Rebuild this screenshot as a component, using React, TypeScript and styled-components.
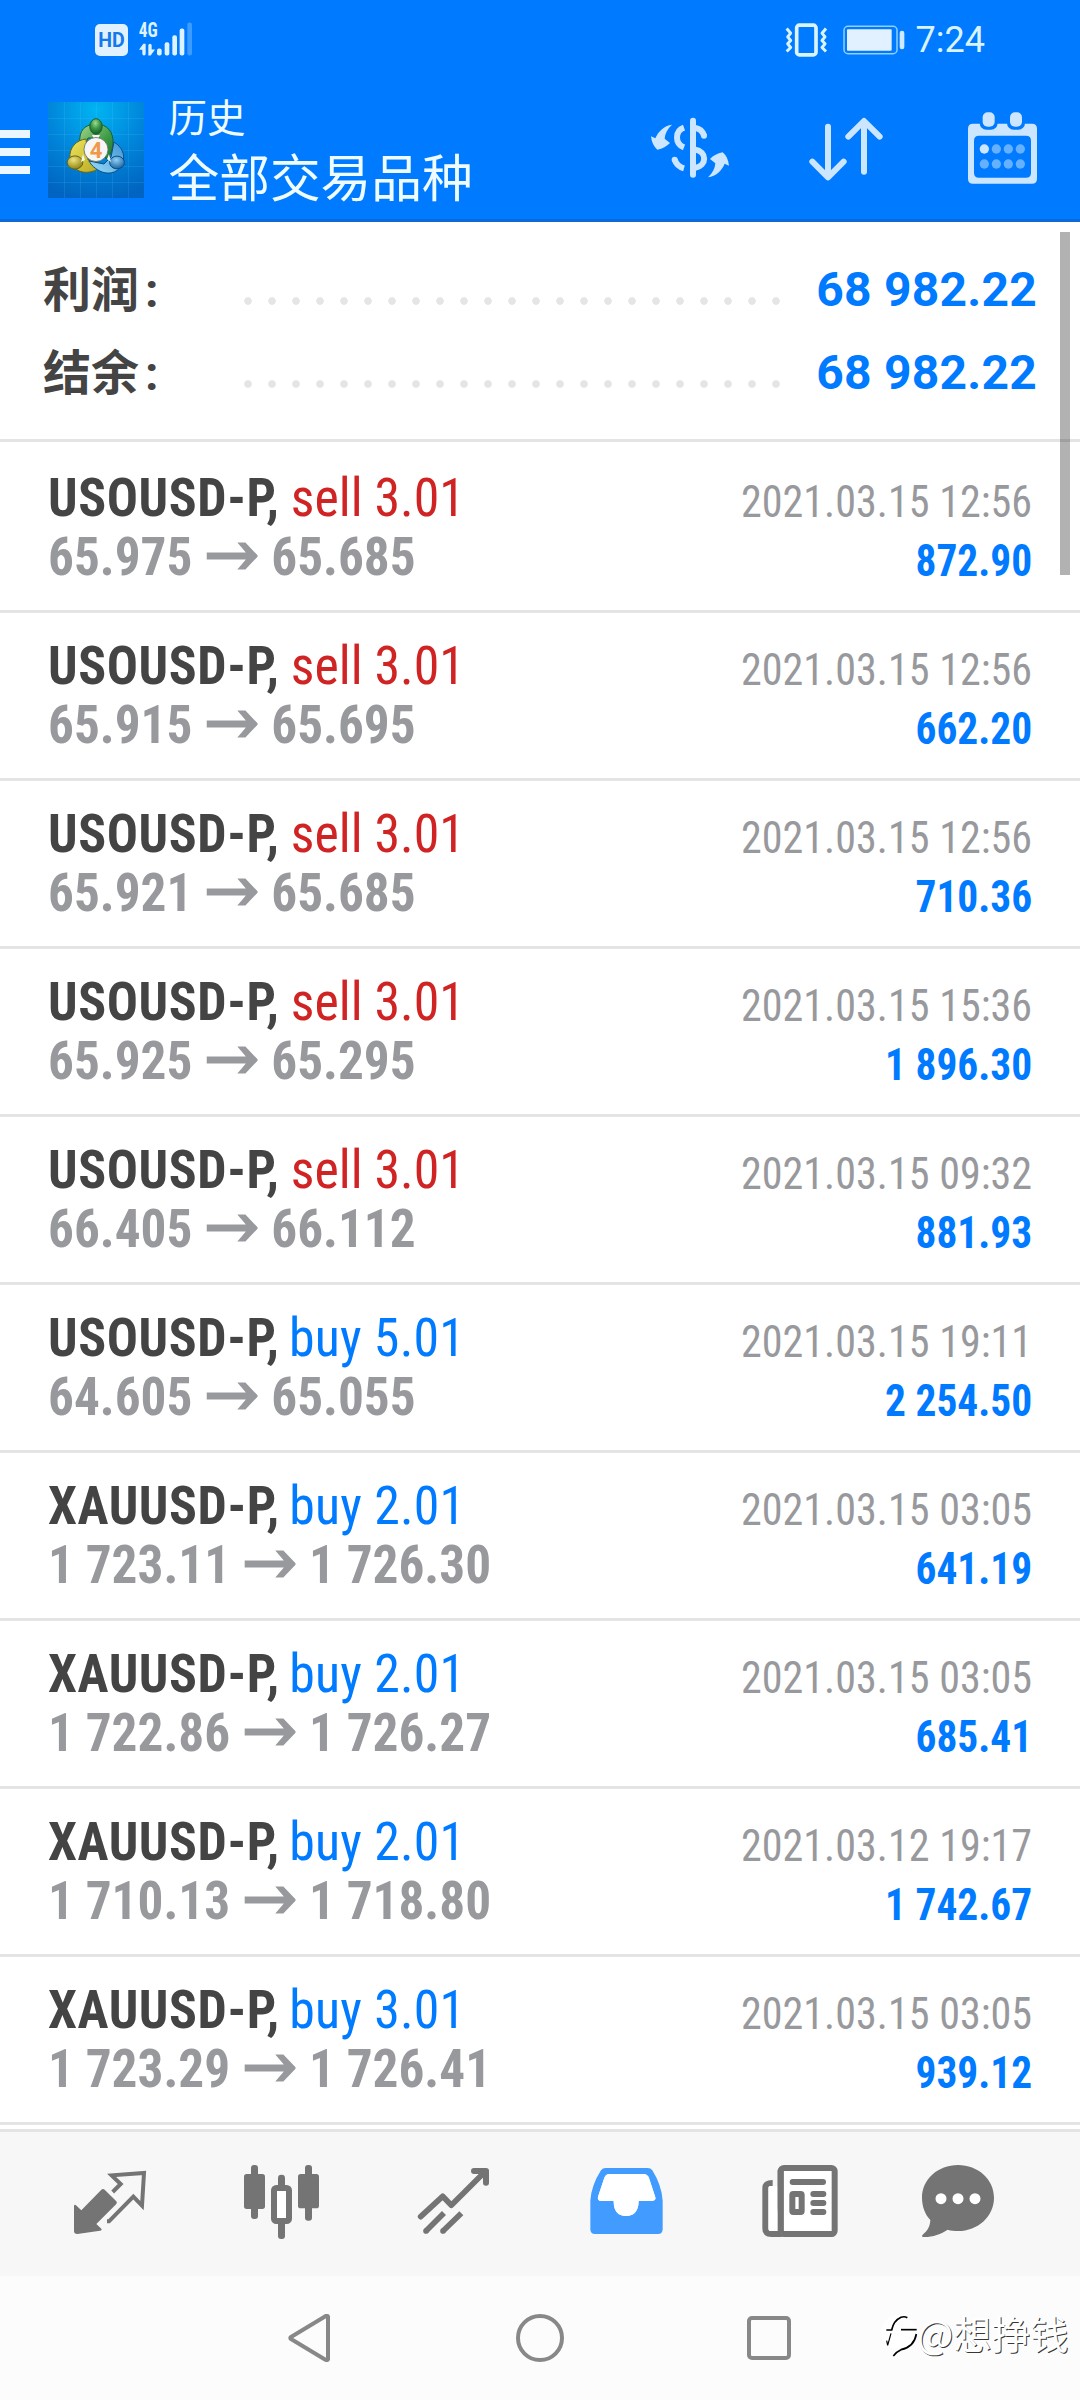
import React from "react";
import styled, { createGlobalStyle } from "styled-components";

const BLUE = "#007aff";
const ICE = "#cce6ff";
const GREY = "#747474";
const CONDENSED = '"Roboto Condensed", Roboto, "Liberation Sans", sans-serif';
const CJK = '"Noto Sans CJK SC", Roboto, sans-serif';

const GlobalStyle = createGlobalStyle`
  * { box-sizing: border-box; }
  body { margin: 0; background: #fff; font-family: Roboto, "Noto Sans CJK SC", sans-serif; }
  svg { display: block; flex: none; }
`;

const Screen = styled.div`
  position: relative;
  width: 1080px;
  height: 2400px;
  display: flex;
  flex-direction: column;
  background: #fff;
  overflow: hidden;
`;

const Header = styled.header`
  height: 222px;
  background: ${BLUE};
  border-bottom: 3px solid #0d69d5;
  display: flex;
  flex-direction: column;
`;

const StatusBar = styled.div`
  height: 79px;
  padding: 0 95px 0 95px;
  display: flex;
  align-items: center;
  justify-content: space-between;
`;

const StatusGroup = styled.div<{ $gap: number }>`
  display: flex;
  align-items: center;
  gap: ${(p) => p.$gap}px;
`;

const HdBadge = styled.div`
  width: 33px;
  height: 32px;
  border-radius: 5px;
  background: #e2f1ff;
`;

const Clock = styled.span`
  font: 400 36px/40px Roboto, sans-serif;
  color: #d9f4ff;
  margin-left: -5px;
`;

const Toolbar = styled.div`
  height: 140px;
  display: flex;
  align-items: flex-start;
`;

const MenuButton = styled.div`
  width: 30px;
  margin-top: 51px;
  display: flex;
  flex-direction: column;
  gap: 10px;
  span { height: 8px; background: #ebf7ff; }
`;

const AppIcon = styled.div`
  width: 96px;
  height: 96px;
  margin: 23px 0 0 18px;
`;

const Titles = styled.div`
  flex: 1;
  margin: 11px 0 0 24.5px;
  color: #effcff;
  font-family: ${CJK};
`;

const Caption = styled.div`
  font-size: 38.5px;
  line-height: 50px;
  height: 52px;
`;

const Heading = styled.div`
  font-size: 50.7px;
  line-height: 66px;
`;

const Actions = styled.div`
  display: flex;
  margin: 34px 42px 0 0;
`;

const ActionButton = styled.div<{ $before?: number }>`
  margin-left: ${(p) => p.$before ?? 0}px;
`;

const Summary = styled.section`
  height: 220px;
  padding: 26px 43px 0 43px;
  border-bottom: 3px solid #e4e4e4;
`;

const SummaryRow = styled.div`
  display: flex;
  height: 83px;
  line-height: 83px;
  font-size: 48px;
  font-weight: 700;
`;

const SummaryLabel = styled.div`
  width: 193px;
  padding-top: 1px;
  color: #444;
  i { font-style: normal; margin-left: 6px; }
`;

const Leader = styled.div`
  width: 552px;
  height: 24px;
  margin-top: 41px;
  background: radial-gradient(circle, #e5e5e5 3.4px, transparent 4.2px) 0 0 / 24px 24px;
`;

const SummaryValue = styled.div`
  flex: 1;
  text-align: right;
  letter-spacing: 0.25px;
  color: ${BLUE};
`;

const List = styled.main`
  flex: 1;
  padding-top: 3px;
`;

const DealRow = styled.article`
  height: 168px;
  padding: 23px 47.5px 0 48px;
  border-bottom: 3px solid #e4e4e4;
  display: flex;
  justify-content: space-between;
  font-family: ${CONDENSED};
  line-height: 59px;
  white-space: nowrap;
`;

const DealTitle = styled.div`
  height: 59px;
  display: flex;
  font-size: 54px;
  transform: scaleX(0.96);
  transform-origin: 0 0;
`;

const Symbol = styled.span`
  font-weight: 700;
  letter-spacing: 0.6px;
  color: #444;
`;

const Side = styled.span<{ $side: string }>`
  margin-left: ${(p) => (p.$side === "sell" ? 11.7 : 9.8)}px;
  letter-spacing: ${(p) => (p.$side === "sell" ? 0 : 0.2)}px;
  color: ${(p) => (p.$side === "sell" ? "#d02424" : BLUE)};
`;

const Prices = styled.div`
  height: 59px;
  display: flex;
  font-size: 54px;
  font-weight: 700;
  color: #98999d;
  transform: scaleX(0.949);
  transform-origin: 0 0;
  svg { margin: 15px 13.8px 0 14.8px; }
`;

const DealSide = styled.div`
  padding-top: 4px;
  text-align: right;
  font-size: 45px;
`;

const DealTime = styled.div`
  height: 59px;
  color: #98999d;
  transform: scaleX(0.936);
  transform-origin: 100% 0;
`;

const DealProfit = styled.div`
  height: 59px;
  font-weight: 700;
  color: ${BLUE};
  transform: scaleX(0.92);
  transform-origin: 100% 0;
`;

const ScrollThumb = styled.div`
  position: absolute;
  left: 1060px;
  top: 232px;
  width: 10px;
  height: 343px;
  background: rgba(0, 0, 0, 0.3);
`;

const TabBar = styled.nav`
  height: 147px;
  padding-left: 68px;
  border-top: 3px solid #e4e4e4;
  background: #f7f7f7;
  display: flex;
  align-items: center;
  gap: 88px;
`;

const Tab = styled.div<{ $shift?: number }>`
  width: 84px;
  margin-left: ${(p) => p.$shift ?? 0}px;
`;

const NavBar = styled.footer`
  height: 124px;
  background: #fcfcfc;
  display: flex;
  align-items: center;
  justify-content: center;
  gap: 181px;
`;

const Watermark = styled.div`
  position: absolute;
  left: 879px;
  top: 2307px;
  display: flex;
  align-items: center;
  font: 400 38.4px/56px ${CJK};
  color: #fff;
  text-shadow: 1px 1px 0.5px rgba(0, 0, 0, 0.8);
  span { margin: -3px 0 0 -2px; }
`;

const deals = [
  ["USOUSD-P", "sell", "3.01", "65.975", "65.685", "2021.03.15 12:56", "872.90"],
  ["USOUSD-P", "sell", "3.01", "65.915", "65.695", "2021.03.15 12:56", "662.20"],
  ["USOUSD-P", "sell", "3.01", "65.921", "65.685", "2021.03.15 12:56", "710.36"],
  ["USOUSD-P", "sell", "3.01", "65.925", "65.295", "2021.03.15 15:36", "1 896.30"],
  ["USOUSD-P", "sell", "3.01", "66.405", "66.112", "2021.03.15 09:32", "881.93"],
  ["USOUSD-P", "buy", "5.01", "64.605", "65.055", "2021.03.15 19:11", "2 254.50"],
  ["XAUUSD-P", "buy", "2.01", "1 723.11", "1 726.30", "2021.03.15 03:05", "641.19"],
  ["XAUUSD-P", "buy", "2.01", "1 722.86", "1 726.27", "2021.03.15 03:05", "685.41"],
  ["XAUUSD-P", "buy", "2.01", "1 710.13", "1 718.80", "2021.03.12 19:17", "1 742.67"],
  ["XAUUSD-P", "buy", "3.01", "1 723.29", "1 726.41", "2021.03.15 03:05", "939.12"],
];

const HdIcon = () => (
  <HdBadge>
    <svg width="33" height="32" viewBox="0 0 33 32">
      <text x="3.2" y="23.3" textLength="26.5" lengthAdjust="spacingAndGlyphs" fontFamily="Roboto" fontWeight="700" fontSize="20.5" fill="#1479ea">HD</text>
    </svg>
  </HdBadge>
);

const SignalIcon = () => (
  <svg width="56" height="48" viewBox="174 16.5 168 144" fill="#dff3ff">
    <text x="176" y="80" textLength="57" lengthAdjust="spacingAndGlyphs" fontFamily="Roboto Condensed" fontWeight="700" fontSize="61">4G</text>
    <path d="M177 118 L190 100 H197 V130 Q197 135 192 135 Q187 135 187 130 V118Z" />
    <path d="M225 117 L212 135 H205 V105 Q205 100 210 100 Q215 100 215 105 V117Z" />
    <rect x="231" y="114" width="14" height="21" rx="6" />
    <rect x="254" y="95" width="14" height="40" rx="6" />
    <rect x="277" y="74" width="14" height="61" rx="6" />
    <rect x="299" y="54" width="14" height="81" rx="6" />
    <rect x="322" y="36" width="14" height="99" rx="6" opacity="0.28" />
  </svg>
);

const zigzag = "M562 84 L574 98 L565 109 L574 120 L565 130 L574 141 L562 153";

const VibrateIcon = () => (
  <svg width="42.7" height="34" viewBox="557 67.5 128 102" fill="none" stroke="#d9f4ff">
    <rect x="592" y="74" width="58" height="89" rx="8" strokeWidth="11" />
    <path d={zigzag} strokeWidth="9" strokeLinejoin="round" />
    <path d={zigzag} strokeWidth="9" strokeLinejoin="round" transform="translate(1242 0) scale(-1 1)" />
  </svg>
);

const BatteryIcon = () => (
  <svg width="61.7" height="30" viewBox="730 73 185 90">
    <rect x="733" y="77" width="159" height="82" rx="12" fill="none" stroke="#8fd0ff" strokeWidth="4.5" />
    <rect x="742" y="86" width="134" height="64" rx="3" fill="#e2f1ff" />
    <rect x="900" y="90" width="14" height="56" rx="7" fill="#cfeaff" />
  </svg>
);

const MetaTraderLogo = () => (
  <svg width="96" height="96" viewBox="0 0 96 96">
    <defs>
      <radialGradient id="sky" cx="50%" cy="8%" r="95%">
        <stop offset="0" stopColor="#00b4f2" />
        <stop offset="0.5" stopColor="#0087dc" />
        <stop offset="1" stopColor="#0064c0" />
      </radialGradient>
      <linearGradient id="green" x1="0" y1="0" x2="1" y2="1">
        <stop offset="0" stopColor="#a5d890" />
        <stop offset="0.6" stopColor="#3f9a45" />
        <stop offset="1" stopColor="#1d7433" />
      </linearGradient>
      <linearGradient id="yellow" x1="0" y1="0" x2="1" y2="1">
        <stop offset="0" stopColor="#eee65e" />
        <stop offset="1" stopColor="#b5a51c" />
      </linearGradient>
      <linearGradient id="blue" x1="1" y1="0" x2="0" y2="1">
        <stop offset="0" stopColor="#3f95d5" />
        <stop offset="1" stopColor="#9bdcf8" />
      </linearGradient>
      <radialGradient id="greenHead" cx="45%" cy="28%" r="70%">
        <stop offset="0" stopColor="#9ddb95" />
        <stop offset="0.5" stopColor="#3f9a45" />
        <stop offset="1" stopColor="#15602a" />
      </radialGradient>
      <radialGradient id="yellowHead" cx="40%" cy="30%" r="75%">
        <stop offset="0" stopColor="#eee67c" />
        <stop offset="1" stopColor="#8a7c10" />
      </radialGradient>
      <radialGradient id="blueHead" cx="45%" cy="30%" r="75%">
        <stop offset="0" stopColor="#8ed2f5" />
        <stop offset="1" stopColor="#125a9c" />
      </radialGradient>
    </defs>
    <rect width="96" height="96" fill="url(#sky)" />
    <path d="M16.5 0V96M32.5 0V96M48.5 0V96M64.5 0V96M80.5 0V96M0 16.5H96M0 32.5H96M0 48.5H96M0 64.5H96M0 80.5H96" stroke="#6fd0ff" strokeOpacity="0.14" />
    <g stroke="#0b4f86" strokeWidth="1">
      <path d="M32 42 C30 28 38 22 48 22 C59 22 66 30 65 42 C64 50 62 54 58 57 L52 36 L40 36 L36 46Z" fill="url(#green)" stroke="#176030" />
      <path d="M38 37 C28 38 21 46 22 56 C23 66 32 72 42 70 C48 69 52 66 54 62 L40 58Z" fill="url(#yellow)" stroke="#6b6412" />
      <path d="M66 40 C74 45 77 52 75 60 C72 70 62 73 54 70 C47 67 43 63 41 59 L56 62 L63 55Z" fill="url(#blue)" />
      <ellipse cx="48" cy="24.5" rx="6.2" ry="7.8" fill="url(#greenHead)" stroke="#176030" />
      <ellipse cx="27" cy="60.5" rx="7.8" ry="6.6" fill="url(#yellowHead)" stroke="#6b6412" />
      <ellipse cx="69" cy="60.5" rx="7.4" ry="6.4" fill="url(#blueHead)" />
    </g>
    <path d="M44 33 H52 L50 37 H46Z M35 52 L37 58 L33 60Z M61 52 L63 60 L59 57Z" fill="#f2f7ee" />
    <circle cx="48" cy="47.5" r="12" fill="#f6f6f4" stroke="#5d6b62" strokeWidth="0.8" />
    <text x="48" y="55.5" textAnchor="middle" fontFamily="Roboto" fontWeight="700" fontSize="22" fill="#f3984a">4</text>
  </svg>
);

const halfArrow =
  "M153 410 L166 416 C174 396 192 378 216 375 C202 388 195 402 194 417 L210 430 C200 440 188 447 172 450 C161 441 155 428 153 410Z";

const CurrencyIcon = () => (
  <svg width="80" height="72" viewBox="150 340 240 216" fill="none" stroke={ICE} strokeWidth="18">
    <path d="M279 363 V525" strokeLinecap="round" />
    <path d="M252 384 C224 394 224 432 252 443" />
    <path d="M224 480 C228 493 238 502 252 506" />
    <path d="M284 384 C298 386 308 394 312 408 M284 449 C322 456 322 498 284 505" />
    <g fill={ICE} stroke="none">
      <circle cx="224" cy="480" r="9" />
      <circle cx="312" cy="408" r="9" />
      <path d={halfArrow} />
      <path d={halfArrow} transform="rotate(180 270 454)" />
    </g>
  </svg>
);

const SortIcon = () => (
  <svg width="76" height="72" viewBox="624 340 228 216" fill="none" stroke={ICE} strokeWidth="18" strokeLinecap="round" strokeLinejoin="round">
    <path d="M684 381 V532 M637 486 L684 533 L731 486" />
    <path d="M792 516 V365 M745 411 L792 364 L839 411" />
  </svg>
);

const CalendarIcon = () => (
  <svg width="71" height="72" viewBox="1101 340 213 216" fill={ICE} overflow="visible">
    <path fillRule="evenodd" d="M1119 372 H1296 Q1311 372 1311 387 V537 Q1311 552 1296 552 H1119 Q1104 552 1104 537 V387 Q1104 372 1119 372Z M1137 408 Q1122 408 1122 423 V519 Q1122 534 1137 534 H1278 Q1293 534 1293 519 V423 Q1293 408 1278 408Z" />
    {[1148, 1230].map((x) => (
      <g key={x}>
        <rect x={x - 9} y="329" width="54" height="61" rx="20" fill={BLUE} />
        <rect x={x} y="338" width="36" height="43" rx="15" />
      </g>
    ))}
    {[448, 493].map((cy) =>
      [1153, 1189, 1225, 1261].map((cx) => (
        <circle key={`${cx}-${cy}`} cx={cx} cy={cy} r="14" fill={cx === 1153 && cy === 448 ? ICE : "#66b1ff"} />
      ))
    )}
  </svg>
);

const PriceArrow = () => (
  <svg width="54.5" height="28" viewBox="0 0 54.5 28" fill="#98999d">
    <path d="M0 10.6 H41.5 L32.5 0.6 H41 L54.5 14 L41 27.4 H32.5 L41.5 17.4 H0Z" />
  </svg>
);

const TabIcon = ({ x, color = GREY, children }: { x: number; color?: string; children: React.ReactNode }) => (
  <svg width="84" height="84" viewBox={`${x} 36 252 252`} fill={color} stroke={color} strokeWidth="0">
    {children}
  </svg>
);

const Tabs = () => (
  <TabBar>
    <Tab>
      <TabIcon x={24}>
        <path d="M42 168 Q43 162 48 166 L64 181 L124 119 Q129 115 134 119 L169 154 Q172 158 169 162 L109 222 L124 236 Q127 241 120 242 L52 252 Q42 252 42 243Z" />
        <path d="M158 126 L182 102 L155 76 L252 69 L246 167 L220 140 L147 214 H141" fill="none" strokeWidth="12" />
      </TabIcon>
    </Tab>
    <Tab>
      <TabIcon x={540}>
        <rect x="573" y="45" width="21" height="162" rx="9" />
        <rect x="552" y="72" width="63" height="105" rx="8" />
        <rect x="654" y="74" width="21" height="50" rx="10" />
        <rect x="654" y="200" width="21" height="67" rx="9" />
        <rect x="642" y="114" width="45" height="99" rx="7" fill="#fff" strokeWidth="18" />
        <rect x="735" y="45" width="21" height="167" rx="9" />
        <rect x="714" y="72" width="63" height="103" rx="8" />
      </TabIcon>
    </Tab>
    <Tab>
      <TabIcon x={1056}>
        <g fill="none" strokeWidth="17" strokeLinecap="round" strokeLinejoin="round">
          <path d="M1082 200 L1148 139 L1174 166 L1274 66" />
          <path d="M1242 63 H1278 V98" strokeWidth="18" />
        </g>
        <circle cx="1098" cy="243" r="8.5" />
        <circle cx="1149" cy="243" r="8.5" />
        <path d="M1098 243 L1152 189 M1149 243 L1204 190" fill="none" strokeWidth="17" />
      </TabIcon>
    </Tab>
    <Tab>
      <TabIcon x={72} color="#429bff">
        <path fillRule="evenodd" d="M137 54 H263 Q272 54 277 61 Q305 106 308 152 V238 Q308 252 294 252 H105 Q91 252 91 238 V152 Q94 106 123 61 Q128 54 137 54Z M148 72 Q137 73 133 83 L114 140 Q111 152 124 153 H161 Q161 198 198 198 Q235 198 236 153 H276 Q289 152 286 142 L267 84 Q263 73 251 72Z" />
        <path d="M148 72 Q137 73 133 83 L114 140 Q111 152 124 153 H161 Q161 198 198 198 Q235 198 236 153 H276 Q289 152 286 142 L267 84 Q263 73 251 72Z" fill="#fff" />
      </TabIcon>
    </Tab>
    <Tab>
      <TabIcon x={588}>
        <rect x="662" y="54" width="162" height="198" rx="10" fill="#fff" strokeWidth="18" />
        <path d="M638 99 Q616 99 616 113 V235 Q616 252 634 252 H665" fill="#fff" strokeWidth="18" />
        <rect x="626" y="108" width="26" height="135" rx="4" fill="#fff" />
        <path d="M653 60 H671 V250 H653Z" />
        <path d="M698 96 H789 M760 132 H790 M760 159 H790 M760 186 H790" strokeWidth="18" strokeLinecap="round" />
        <rect x="697" y="132" width="28" height="54" rx="3" fill="#fff" strokeWidth="18" />
      </TabIcon>
    </Tab>
    <Tab $shift={-12}>
      <TabIcon x={1068}>
        <path d="M1194 45 C1254 45 1302 88 1302 143 C1302 199 1254 243 1194 243 C1183 243 1173 242 1163 239 C1143 253 1115 262 1090 261 Q1083 260 1088 254 C1104 241 1110 229 1111 210 C1095 193 1086 169 1086 143 C1086 88 1134 45 1194 45Z" />
        <g fill="#fff">
          <circle cx="1143" cy="146" r="16.5" />
          <circle cx="1194" cy="146" r="16.5" />
          <circle cx="1245" cy="146" r="16.5" />
        </g>
      </TabIcon>
    </Tab>
  </TabBar>
);

const AndroidNav = () => (
  <NavBar>
    <svg width="48" height="48" viewBox="0 0 48 48" fill="none" stroke="#888" strokeWidth="4" strokeLinejoin="round">
      <path d="M41 2.5 V45.5 Q40 47 38 45.5 L4 25 Q2.6 24 4 23 L38 2.5 Q40 1 41 2.5Z" />
    </svg>
    <svg width="48" height="48" viewBox="0 0 48 48" fill="none" stroke="#888" strokeWidth="4">
      <circle cx="24" cy="24" r="22" />
    </svg>
    <svg width="48" height="48" viewBox="0 0 48 48" fill="none" stroke="#888" strokeWidth="4">
      <rect x="4" y="4" width="40" height="40" rx="3" />
    </svg>
  </NavBar>
);

const WatermarkLogo = () => (
  <svg width="40" height="48" viewBox="54 80 120 144" fill="none" stroke="#000">
    <ellipse cx="114" cy="146" rx="53" ry="52" fill="#fff" stroke="none" />
    <path d="M76 140 H92 Q98 112 120 102 Q130 98 139 103" strokeWidth="5" />
    <path d="M120 139 H167" strokeWidth="5" />
    <path d="M90 150 L80 186 L77 172" strokeWidth="3.5" />
    <path d="M166 152 Q160 190 120 199 Q108 204 97 218" strokeWidth="5" />
  </svg>
);

export default function App() {
  return (
    <Screen>
      <GlobalStyle />
      <Header>
        <StatusBar>
          <StatusGroup $gap={10}>
            <HdIcon />
            <SignalIcon />
          </StatusGroup>
          <StatusGroup $gap={15.5}>
            <VibrateIcon />
            <BatteryIcon />
            <Clock>7:24</Clock>
          </StatusGroup>
        </StatusBar>
        <Toolbar>
          <MenuButton><span /><span /><span /></MenuButton>
          <AppIcon><MetaTraderLogo /></AppIcon>
          <Titles>
            <Caption>历史</Caption>
            <Heading>全部交易品种</Heading>
          </Titles>
          <Actions>
            <ActionButton><CurrencyIcon /></ActionButton>
            <ActionButton $before={78}><SortIcon /></ActionButton>
            <ActionButton $before={83}><CalendarIcon /></ActionButton>
          </Actions>
        </Toolbar>
      </Header>

      <Summary>
        {["利润", "结余"].map((label) => (
          <SummaryRow key={label}>
            <SummaryLabel>{label}<i>:</i></SummaryLabel>
            <Leader />
            <SummaryValue>68 982.22</SummaryValue>
          </SummaryRow>
        ))}
      </Summary>

      <List>
        {deals.map(([symbol, side, volume, open, close, time, profit], i) => (
          <DealRow key={i}>
            <div>
              <DealTitle>
                <Symbol>{symbol},</Symbol>
                <Side $side={side}>{side} {volume}</Side>
              </DealTitle>
              <Prices>
                <span>{open}</span>
                <PriceArrow />
                <span>{close}</span>
              </Prices>
            </div>
            <DealSide>
              <DealTime>{time}</DealTime>
              <DealProfit>{profit}</DealProfit>
            </DealSide>
          </DealRow>
        ))}
      </List>

      <Tabs />
      <AndroidNav />
      <ScrollThumb />
      <Watermark>
        <WatermarkLogo />
        <span>@想挣钱</span>
      </Watermark>
    </Screen>
  );
}
